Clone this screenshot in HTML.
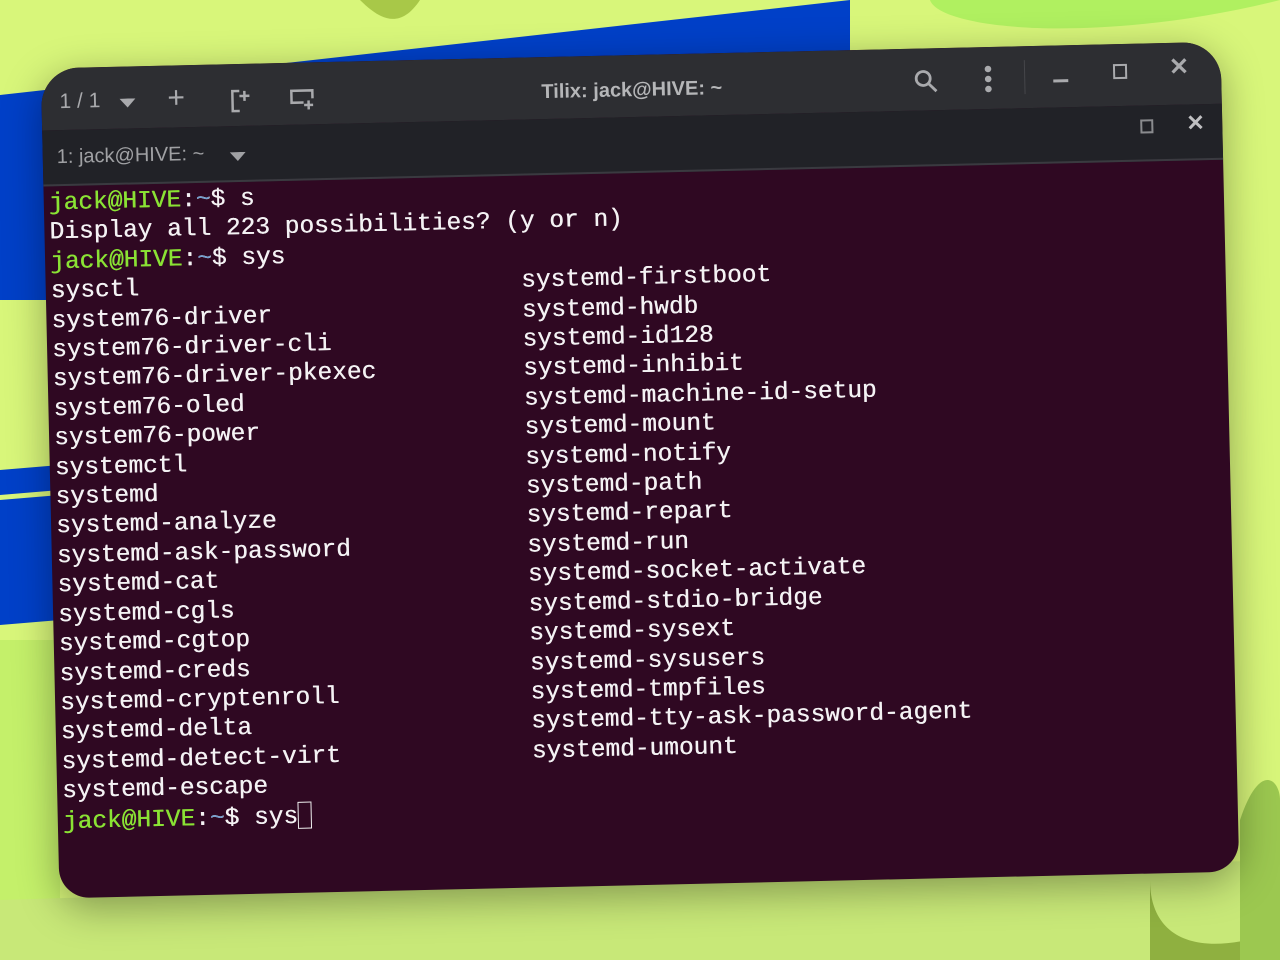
<!DOCTYPE html>
<html><head><meta charset="utf-8"><style>
html,body{margin:0;padding:0;width:1280px;height:960px;overflow:hidden;background:#d8f67a;}
.bg{position:absolute;inset:0;}
.win{position:absolute;left:50px;top:55px;width:1180px;height:830px;transform:rotate(-1.3deg);border-radius:38px 38px 30px 30px;overflow:hidden;background:#2f0822;box-shadow:0 10px 40px rgba(0,0,0,.35);}
.tb{height:62px;background:#2d2e32;position:relative;color:#a9aaad;font-family:"Liberation Sans",sans-serif;}
.tab{height:54px;background:#212227;border-bottom:2px solid #3a3a40;position:relative;color:#a0a1a4;font-family:"Liberation Sans",sans-serif;}
.term{font-family:"Liberation Mono",monospace;font-size:24.5px;line-height:29.4px;color:#f4f2f4;white-space:pre;padding:3px 0 0 5px;font-weight:normal;text-shadow:0.4px 0 0 #f4f2f4;position:relative;}
.g{color:#8ae234;text-shadow:0.4px 0 0 #8ae234}.b{color:#729fcf}
.abs{position:absolute}
</style></head><body>
<svg class="bg" width="1280" height="960">
<polygon points="0,95 850,0 850,300 0,300" fill="#0040c8"/>
<polygon points="0,500 60,495 60,620 0,625" fill="#0040c8"/>
<polygon points="0,470 60,465 60,490 0,495" fill="#0040c8"/>
<path d="M930,0 C940,30 1100,45 1280,0 Z" fill="#b0f060"/>
<path d="M360,0 C380,20 400,30 420,0 Z" fill="#a8c848"/>
<polygon points="0,640 60,640 60,960 0,960" fill="#c4f06a"/>
<polygon points="0,900 1280,860 1280,960 0,960" fill="#c8e878"/>
<path d="M1150,880 C1150,940 1200,960 1280,930 L1280,960 L1150,960 Z" fill="#8fb040"/>
<path d="M1240,820 C1260,760 1280,780 1280,800 L1280,960 L1240,960 Z" fill="#9cc850"/>
</svg>
<div class="win">
 <div class="tb">
  <div class="abs" style="left:18px;top:22px;font-size:21px;">1 / 1</div>
  <svg class="abs" style="left:78px;top:32px" width="16" height="10"><path d="M0,0 L16,0 L8,9Z" fill="#a9aaad"/></svg>
  <div class="abs" style="left:126px;top:16px;font-size:30px;">+</div>
  <svg class="abs" style="left:188px;top:24px" width="22" height="26" fill="none" stroke="#a9aaad" stroke-width="2.5"><path d="M10,3 H3 V23 H10 M15,3 V13 M10,8 H20"/></svg>
  <svg class="abs" style="left:248px;top:26px" width="26" height="22" fill="none" stroke="#a9aaad" stroke-width="2.5"><path d="M14,14 H2 V2 H23 V10 M19,12 V21 M14.5,16.5 H23.5"/></svg>
  <div class="abs" style="left:500px;top:24px;font-size:20px;font-weight:bold;color:#b5b6b8;">Tilix: jack@HIVE: ~</div>
  <svg class="abs" style="left:872px;top:20px" width="26" height="26" fill="none" stroke="#a9aaad" stroke-width="2.8"><circle cx="10" cy="10" r="7"/><path d="M15,15 L23,23"/></svg>
  <svg class="abs" style="left:943px;top:18px" width="8" height="28" fill="#a9aaad"><circle cx="4" cy="4" r="3.3"/><circle cx="4" cy="14" r="3.3"/><circle cx="4" cy="24" r="3.3"/></svg>
  <div class="abs" style="left:983px;top:14px;width:1px;height:34px;background:#45464a"></div>
  <div class="abs" style="left:1012px;top:34px;width:15px;height:3px;background:#a9aaad"></div>
  <div class="abs" style="left:1072px;top:20px;width:10px;height:11px;border:2.5px solid #a9aaad"></div>
  <div class="abs" style="left:1128px;top:10px;font-size:24px;font-weight:bold">✕</div>
 </div>
 <div class="tab">
  <div class="abs" style="left:14px;top:16px;font-size:20px;">1: jack@HIVE: ~</div>
  <svg class="abs" style="left:187px;top:26px" width="16" height="10"><path d="M0,0 L16,0 L8,9Z" fill="#a0a1a4"/></svg>
  <div class="abs" style="left:1098px;top:14px;width:9px;height:10px;border:2px solid #8a8b8e"></div>
  <div class="abs" style="left:1144px;top:6px;font-size:22px;font-weight:bold;color:#c0c0c2">✕</div>
 </div>
 <div class="term"><span class="g">jack@HIVE</span>:<span class="b">~</span>$ s
Display all 223 possibilities? (y or n)
<span class="g">jack@HIVE</span>:<span class="b">~</span>$ sys
sysctl                          systemd-firstboot
system76-driver                 systemd-hwdb
system76-driver-cli             systemd-id128
system76-driver-pkexec          systemd-inhibit
system76-oled                   systemd-machine-id-setup
system76-power                  systemd-mount
systemctl                       systemd-notify
systemd                         systemd-path
systemd-analyze                 systemd-repart
systemd-ask-password            systemd-run
systemd-cat                     systemd-socket-activate
systemd-cgls                    systemd-stdio-bridge
systemd-cgtop                   systemd-sysext
systemd-creds                   systemd-sysusers
systemd-cryptenroll             systemd-tmpfiles
systemd-delta                   systemd-tty-ask-password-agent
systemd-detect-virt             systemd-umount
systemd-escape
<span class="g">jack@HIVE</span>:<span class="b">~</span>$ sys<span style="display:inline-block;width:14px;height:27px;border:1.5px solid #eee;vertical-align:-6px;box-sizing:border-box"></span></div>
</div>
</body></html>
